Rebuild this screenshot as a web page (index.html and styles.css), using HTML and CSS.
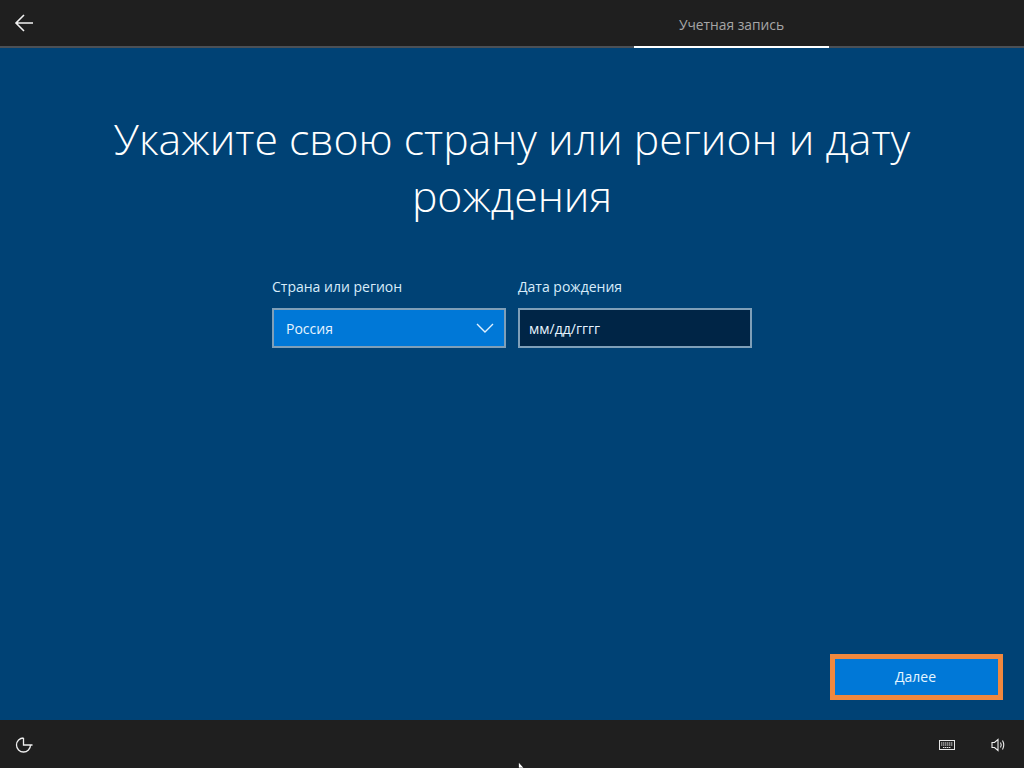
FILE: index.html
```html
<!DOCTYPE html>
<html lang="ru">
<head>
<meta charset="utf-8">
<title>Учетная запись</title>
<link rel="stylesheet" href="styles.css">
</head>
<body>
<div class="screen">
  <header class="topbar">
    <button class="back" aria-label="Назад">
      <svg width="20" height="18" viewBox="0 0 20 18"><path d="M10 1 L2 9 L10 17 M2 9 H19" fill="none" stroke="#f2f2f2" stroke-width="1.6"/></svg>
    </button>
    <div class="tab">Учетная запись</div>
  </header>
  <main class="content">
    <h1 class="title">Укажите свою страну или регион и дату рождения</h1>
    <div class="form">
      <div class="field">
        <label class="label">Страна или регион</label>
        <div class="select">
          <span>Россия</span>
          <svg width="18" height="10" viewBox="0 0 18 10"><path d="M1 1 L9 9 L17 1" fill="none" stroke="#dff1ff" stroke-width="1.4"/></svg>
        </div>
      </div>
      <div class="field">
        <label class="label">Дата рождения</label>
        <div class="input">мм/дд/гггг</div>
      </div>
    </div>
    <div class="actions">
      <button class="next">Далее</button>
    </div>
  </main>
  <footer class="bottombar">
    <svg width="18" height="18" viewBox="0 0 18 18"><path d="M8.5 2 A7 7 0 1 0 15.5 9 M8.5 2 V9 H17.5" fill="none" stroke="#eeeeee" stroke-width="1.3"/></svg>
    <div class="tray">
      <svg width="16" height="10" viewBox="0 0 16 10"><rect x="0.5" y="0.5" width="15" height="9" fill="none" stroke="#e6e6e6"/><path d="M2 3 H14 M2 5 H14 M4 7.5 H12" stroke="#e6e6e6" stroke-dasharray="1.4 .6" fill="none"/></svg>
      <svg width="15" height="14" viewBox="0 0 15 14"><path d="M1 4.5 H3.5 L7 1.5 V12.5 L3.5 9.5 H1 Z" fill="none" stroke="#eeeeee" stroke-width="1.1"/><path d="M9.5 4.5 Q11 7 9.5 9.5 M11.5 2.5 Q14 7 11.5 11.5" fill="none" stroke="#eeeeee" stroke-width="1.1"/></svg>
    </div>
  </footer>
  <svg class="cursor" width="8" height="6" viewBox="0 0 8 6"><path d="M0.5 0 L0.5 6 L6 6 Z" fill="#fff" stroke="#000" stroke-width=".6"/></svg>
</div>
</body>
</html>
```
FILE: styles.css
```css
* { box-sizing: border-box; }
html, body { margin: 0; padding: 0; }
body { font-family: "Open Sans", "Liberation Sans", sans-serif; overflow: hidden; }
.screen { position: relative; width: 1024px; height: 768px; display: flex; flex-direction: column; background: #004275; color: #fff; }
.topbar { height: 48px; flex: none; display: flex; justify-content: space-between; background: #1f1f1f; border-bottom: 2px solid #4b5056; }
.back { width: 48px; height: 46px; padding: 0 0 0 14px; border: 0; background: none; display: flex; align-items: center; }
.tab { width: 195px; height: 48px; margin-right: 195px; border-bottom: 2px solid #fff; color: #a6a6a6; font-size: 13.8px; line-height: 50px; text-align: center; }
.content { flex: 1; display: flex; flex-direction: column; align-items: center; }
.title { width: 830px; margin: 62px 0 0; font-size: 42.75px; line-height: 57px; font-weight: 300; text-align: center; color: #fff; }
.form { display: flex; gap: 12px; margin-top: 53px; }
.field { width: 234px; display: flex; flex-direction: column; }
.label { font-size: 14px; line-height: 20px; color: #d8ecfa; margin-bottom: 11px; }
.select, .input { height: 40px; border: 2px solid #7f9fb8; font-size: 14px; color: #e6f4ff; display: flex; align-items: center; }
.select { background: #0078d7; justify-content: space-between; padding: 0 10px 0 12px; }
.input { background: #002546; padding-left: 9px; }
.actions { align-self: flex-end; margin: auto 21px 20px 0; }
.next { display: block; width: 173px; height: 46px; padding: 0 2px 2px 0; background: #0078d7; border: 5px solid #f0883e; color: #e6f6ff; font: 14px "Open Sans", "Liberation Sans", sans-serif; }
.bottombar { height: 48px; flex: none; background: #1f1f1f; display: flex; align-items: center; justify-content: space-between; padding: 2px 18px 0 15px; }
.tray { display: flex; align-items: center; gap: 36px; }
.cursor { position: absolute; left: 518px; top: 762px; }
```
